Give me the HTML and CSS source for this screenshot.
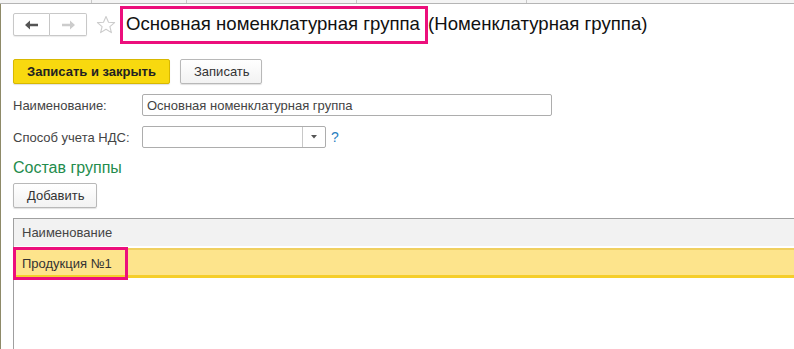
FILE: index.html
```html
<!DOCTYPE html>
<html lang="ru">
<head>
<meta charset="utf-8">
<link rel="stylesheet" href="styles.css">
</head>
<body>
<div class="topstrip">
  <span class="seg s1"></span><span class="seg s2"></span><span class="seg s3"></span><span class="seg s4"></span>
</div>
<div class="window">
  <div class="header">
    <div class="nav">
      <button class="navbtn back"><svg width="14" height="10" viewBox="0 0 14 10"><path d="M0 5 L5 0.5 L5 3.8 L13 3.8 L13 6.2 L5 6.2 L5 9.5 Z" fill="#555"/></svg></button>
      <button class="navbtn fwd"><svg width="14" height="10" viewBox="0 0 14 10"><path d="M14 5 L9 0.5 L9 3.8 L1 3.8 L1 6.2 L9 6.2 L9 9.5 Z" fill="#ccc"/></svg></button>
    </div>
    <svg class="star" width="20" height="20" viewBox="0 0 20 20"><path d="M10 1.5 L12.5 7.2 L18.6 7.6 L13.9 11.6 L15.4 17.6 L10 14.3 L4.6 17.6 L6.1 11.6 L1.4 7.6 L7.5 7.2 Z" fill="none" stroke="#ccc" stroke-width="1.1" stroke-linejoin="round"/></svg>
    <h1 class="title"><span class="hl">Основная номенклатурная группа&nbsp;</span>(Номенклатурная группа)</h1>
  </div>
  <div class="toolbar">
    <button class="btn primary">Записать и закрыть</button>
    <button class="btn">Записать</button>
  </div>
  <div class="row">
    <label class="lbl">Наименование:</label>
    <div class="input wide">Основная номенклатурная группа</div>
  </div>
  <div class="row">
    <label class="lbl">Способ учета НДС:</label>
    <div class="input select"><span class="selval"></span><span class="drop"><svg width="6" height="4" viewBox="0 0 6 4"><path d="M0 0 L6 0 L3 3.5 Z" fill="#555"/></svg></span></div>
    <span class="help">?</span>
  </div>
  <div class="section">Состав группы</div>
  <div class="toolbar2">
    <button class="btn">Добавить</button>
  </div>
  <div class="table">
    <div class="thead">Наименование</div>
    <div class="trow selected"><span class="cell hlcell">Продукция №1</span></div>
  </div>
</div>
</body>
</html>
```
FILE: styles.css
```css
* { box-sizing: border-box; }
html, body { margin: 0; padding: 0; background: #fff; }
body {
  width: 794px; height: 349px; overflow: hidden;
  font-family: Arial, "Liberation Sans", sans-serif;
  font-size: 13px; color: #333;
}
.topstrip {
  height: 4px; background: #f4f4f4; border-bottom: 1px solid #b5b5b5;
  display: flex;
}
.seg { height: 100%; border-right: 1px solid #c8c8c8; }
.s1 { width: 92px; } .s2 { width: 95px; } .s3 { width: 170px; } .s4 { width: 170px; }
.window {
  border-left: 1px solid #8e8a68;
  height: 345px;
  padding: 0 0 0 12px;
}
.header {
  display: flex; align-items: center; height: 41px; padding-top: 0;
}
.nav { display: flex; }
.navbtn {
  width: 37px; height: 23px; background: #fff; border: 1px solid #c8c8c8;
  display: flex; align-items: center; justify-content: center; padding: 0;
  box-shadow: 0 1px 1px rgba(0,0,0,0.08);
}
.navbtn.back { border-radius: 2px 0 0 2px; }
.navbtn.fwd { border-left: none; border-radius: 0 2px 2px 0; }
.star { margin-left: 9px; margin-right: 4px; }
.title {
  margin: 0; font-weight: normal; font-size: 18.6px; color: #111;
  font-family: Arial, "Liberation Sans", sans-serif; white-space: nowrap;
}
.hl {
  display: inline-block; border: 3px solid #ec0f7c; padding: 4px 0 6px 3px;
}
.toolbar { display: flex; gap: 10px; margin-top: 14px; }
.btn {
  height: 25px; padding: 0 13px; font: inherit; font-size: 13px; color: #333;
  background: linear-gradient(#fff, #f2f2f2); border: 1px solid #b8b8b8; border-radius: 2px;
  box-shadow: 0 1px 1px rgba(0,0,0,0.12);
}
.btn.primary {
  background: #f8d90f; border-color: #d8b800; color: #222; width: 157px; font-weight: bold;
}
.toolbar .btn:not(.primary) { width: 82px; }
.row { display: flex; align-items: center; margin-top: 10px; height: 22px; }
.row + .row { margin-top: 10px; }
.lbl { width: 129px; color: #444; }
.input {
  height: 22px; border: 1px solid #adadad; border-radius: 2px; background: #fff;
  padding: 0 4px; display: flex; align-items: center; color: #444;
}
.input.wide { width: 410px; }
.input.select { width: 184px; padding: 0; }
.selval { flex: 1; }
.drop { width: 23px; height: 100%; border-left: 1px solid #c8c8c8; display: flex; align-items: center; justify-content: center; }
.help { margin-left: 5px; color: #2a7fbf; font-size: 14px; }
.section { color: #238c4c; font-size: 16px; margin-top: 10px; height: 19px; line-height: 19px; }
.toolbar2 { margin-top: 6px; }
.toolbar2 .btn { width: 84px; height: 25px; }
.table {
  margin-top: 10px; border-top: 1px solid #a0a0a0; border-left: 1px solid #a0a0a0;
  height: 140px;
}
.thead {
  height: 29px; background: #f2f2f2; padding-left: 8px; display: flex; align-items: center;
  color: #444; border-bottom: 2px solid #fff;
}
.trow.selected {
  height: 30px; background: #fde48c; border-top: 2px solid #f0d060; border-bottom: 3px solid #f5ce2a;
  display: flex; align-items: center;
}
.hlcell {
  display: flex; align-items: center; height: 33px; margin-left: -1px; margin-top: 1px;
  width: 115px; border: 3px solid #ec0f7c; padding-left: 6px; color: #333;
}
```
